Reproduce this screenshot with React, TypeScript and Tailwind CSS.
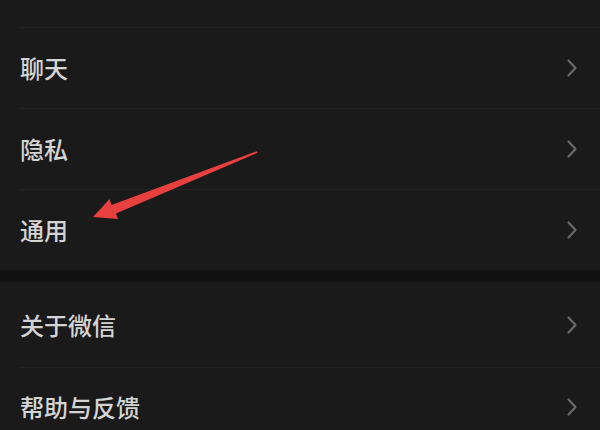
import React from "react";

function Chevron() {
  return (
    <svg width="12" height="18" viewBox="0 0 12 18" className="shrink-0">
      <path d="M2.5 1.5 L9.5 9 L2.5 16.5" fill="none" stroke="#696969" strokeWidth="2.2" strokeLinecap="round" strokeLinejoin="round" />
    </svg>
  );
}

function Row({ label, h, border = true }: { label: string; h: string; border?: boolean }) {
  return (
    <div className={`flex items-center justify-between pl-5 ${h}`}>
      <div className={`flex h-full w-full items-center justify-between pr-[22px] ${border ? "border-t border-[#232323]" : ""}`}>
        <span className="text-[24px] font-medium leading-none text-[#d4d4d4]" style={{ fontFamily: '"Noto Sans CJK SC", "Noto Sans", sans-serif' }}>
          {label}
        </span>
        <Chevron />
      </div>
    </div>
  );
}

export default function App() {
  return (
    <div className="relative h-[430px] w-[600px] overflow-hidden bg-[#1a1a1a]">
      <div className="flex flex-col">
        <div className="h-[27px]" />
        <Row label="聊天" h="h-[81px]" />
        <Row label="隐私" h="h-[81px]" />
        <Row label="通用" h="h-[81px]" />
        <div className="h-[12px] bg-[#111111]" />
        <Row label="关于微信" h="h-[85px]" border={false} />
        <Row label="帮助与反馈" h="h-[78px]" />
      </div>
      <svg className="pointer-events-none absolute left-0 top-0" width="600" height="430" viewBox="0 0 600 430">
        <polygon
          points="93,217 109.5,199 111.5,205 257,151.2 257.6,152.8 116,213.5 118,219"
          fill="#e8403f"
        />
      </svg>
    </div>
  );
}
